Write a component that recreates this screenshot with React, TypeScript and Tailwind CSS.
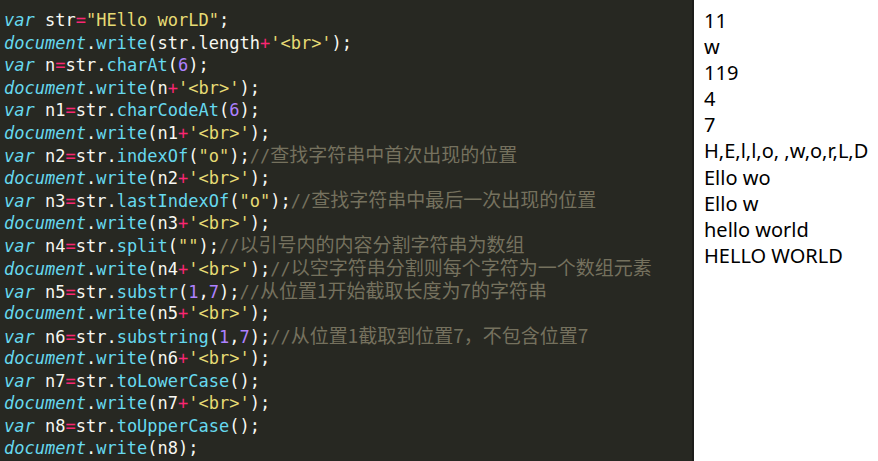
import React from "react";

type Tok = [string, string];

const K = "text-[#66d9ef] italic"; // var, document
const F = "text-[#66d9ef]"; // method
const W = "text-[#f8f8f2]";
const O = "text-[#f92672]";
const S = "text-[#e6db74]";
const N = "text-[#ae81ff]";
const C = "text-[#75715e]";

const wr = (arg: Tok[], tail: Tok[] = []): Tok[] => [
  [K, "document"],
  [W, "."],
  [F, "write"],
  [W, "("],
  ...arg,
  [W, ");"],
  ...tail,
];
const br = (v: string, tail: Tok[] = []): Tok[] =>
  wr([[W, v], [O, "+"], [S, "'<br>'"]], tail);

const lines: Tok[][] = [
  [[K, "var"], [W, " str"], [O, "="], [S, '"HEllo worLD"'], [W, ";"]],
  wr([[W, "str.length"], [O, "+"], [S, "'<br>'"]]),
  [[K, "var"], [W, " n"], [O, "="], [W, "str."], [F, "charAt"], [W, "("], [N, "6"], [W, ");"]],
  br("n"),
  [[K, "var"], [W, " n1"], [O, "="], [W, "str."], [F, "charCodeAt"], [W, "("], [N, "6"], [W, ");"]],
  br("n1"),
  [[K, "var"], [W, " n2"], [O, "="], [W, "str."], [F, "indexOf"], [W, "("], [S, '"o"'], [W, ");"], [C, "//查找字符串中首次出现的位置"]],
  br("n2"),
  [[K, "var"], [W, " n3"], [O, "="], [W, "str."], [F, "lastIndexOf"], [W, "("], [S, '"o"'], [W, ");"], [C, "//查找字符串中最后一次出现的位置"]],
  br("n3"),
  [[K, "var"], [W, " n4"], [O, "="], [W, "str."], [F, "split"], [W, "("], [S, '""'], [W, ");"], [C, "//以引号内的内容分割字符串为数组"]],
  br("n4", [[C, "//以空字符串分割则每个字符为一个数组元素"]]),
  [[K, "var"], [W, " n5"], [O, "="], [W, "str."], [F, "substr"], [W, "("], [N, "1"], [W, ","], [N, "7"], [W, ");"], [C, "//从位置1开始截取长度为7的字符串"]],
  br("n5"),
  [[K, "var"], [W, " n6"], [O, "="], [W, "str."], [F, "substring"], [W, "("], [N, "1"], [W, ","], [N, "7"], [W, ");"], [C, "//从位置1截取到位置7，不包含位置7"]],
  br("n6"),
  [[K, "var"], [W, " n7"], [O, "="], [W, "str."], [F, "toLowerCase"], [W, "();"]],
  br("n7"),
  [[K, "var"], [W, " n8"], [O, "="], [W, "str."], [F, "toUpperCase"], [W, "();"]],
  wr([[W, "n8"]]),
];

const out = [
  "11",
  "w",
  "119",
  "4",
  "7",
  "H,E,l,l,o, ,w,o,r,L,D",
  "Ello wo",
  "Ello w",
  "hello world",
  "HELLO WORLD",
];

export default function App() {
  return (
    <div className="flex h-[461px] w-[878px] overflow-hidden bg-white">
      <div className="h-full w-[692px] shrink-0 bg-[#272822] pl-[4px] pt-[9px]">
        {lines.map((ln, i) => (
          <div
            key={i}
            className="h-[22.55px] whitespace-pre text-[17px] leading-[22.55px]"
            style={{ fontFamily: '"DejaVu Sans Mono", "Noto Sans CJK SC", monospace' }}
          >
            {ln.map(([c, t], j) =>
              c === C ? (
                <span key={j} className={c}>
                  {t.slice(0, 2)}
                  <span
                    className="text-[19px] leading-[20px]"
                    style={{ fontFamily: '"Noto Sans CJK SC", sans-serif' }}
                  >
                    {t.slice(2)}
                  </span>
                </span>
              ) : (
                <span key={j} className={c}>
                  {t}
                </span>
              )
            )}
          </div>
        ))}
      </div>
      <div className="h-full w-[2px] shrink-0 bg-[#1c1c1a]" />
      <div
        className="flex-1 pl-[10px] pt-[8px] text-[20px] leading-[26.1px] text-black"
        style={{ fontFamily: '"Noto Sans", "Noto Sans CJK SC", sans-serif' }}
      >
        {out.map((o, i) => (
          <div key={i} className="h-[26.1px] whitespace-pre">
            {o}
          </div>
        ))}
      </div>
    </div>
  );
}
